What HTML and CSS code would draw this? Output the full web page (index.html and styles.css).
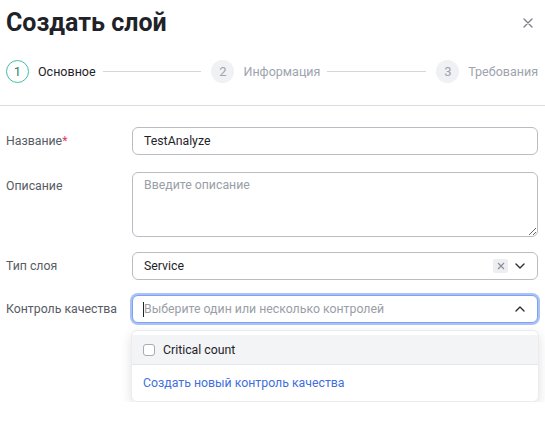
FILE: index.html
```html
<!DOCTYPE html>
<html lang="ru">
<head>
    <meta charset="UTF-8">
    <title>Создать слой</title>
    <link rel="stylesheet" href="styles.css">
</head>
<body>
    <div class="modal">
        <div class="modal-header">
            <h1>Создать слой</h1>
            <button class="close-btn" aria-label="Закрыть">
                <svg width="10" height="10" viewBox="0 0 10 10"><path d="M1 1L9 9M9 1L1 9" stroke="#7a7f8a" stroke-width="1.3" stroke-linecap="round"/></svg>
            </button>
        </div>
        <div class="steps">
            <div class="step active"><span class="step-num">1</span><span class="step-title">Основное</span></div>
            <div class="step-line"></div>
            <div class="step"><span class="step-num">2</span><span class="step-title">Информация</span></div>
            <div class="step-line"></div>
            <div class="step"><span class="step-num">3</span><span class="step-title">Требования</span></div>
        </div>
    </div>
    <div class="divider"></div>
    <form class="form">
        <div class="form-row">
            <label class="form-label">Название<span class="required">*</span></label>
            <input class="field" type="text" value="TestAnalyze">
        </div>
        <div class="form-row form-row-text">
            <label class="form-label">Описание</label>
            <textarea class="field textarea" placeholder="Введите описание"></textarea>
        </div>
        <div class="form-row">
            <label class="form-label">Тип слоя</label>
            <div class="field select">
                <span class="select-value">Service</span>
                <span class="clear-btn">
                    <svg width="8" height="8" viewBox="0 0 8 8"><path d="M1 1L7 7M7 1L1 7" stroke="#8a8f99" stroke-width="1.2"/></svg>
                </span>
                <svg class="chevron" width="10" height="6" viewBox="0 0 10 6"><path d="M1 1L5 5L9 1" fill="none" stroke="#2b2f36" stroke-width="1.4" stroke-linecap="round" stroke-linejoin="round"/></svg>
            </div>
        </div>
        <div class="form-row">
            <label class="form-label">Контроль качества</label>
            <div class="select-wrap">
                <div class="field select focused">
                    <span class="caret"></span>
                    <span class="select-placeholder">Выберите один или несколько контролей</span>
                    <svg class="chevron" width="10" height="6" viewBox="0 0 10 6"><path d="M1 5L5 1L9 5" fill="none" stroke="#2b2f36" stroke-width="1.4" stroke-linecap="round" stroke-linejoin="round"/></svg>
                </div>
                <div class="dropdown">
                    <div class="option hovered">
                        <span class="checkbox"></span>
                        <span>Critical count</span>
                    </div>
                    <div class="dropdown-footer">
                        <a href="#" class="create-link">Создать новый контроль качества</a>
                    </div>
                </div>
            </div>
        </div>
    </form>
</body>
</html>
```

FILE: styles.css
```css
body {
    margin: 0;
    background: #fff;
    font-family: Roboto, "Noto Sans", sans-serif;
    color: #1f2329;
}
.modal {
    padding: 7px 7px 0 6px;
}
.modal-header {
    display: flex;
    justify-content: space-between;
    align-items: center;
    height: 32px;
}
.modal-header h1 {
    margin: 0;
    font-size: 25px;
    font-weight: 700;
    line-height: 32px;
    color: #1f2329;
}
.close-btn {
    border: none;
    background: none;
    padding: 0;
    margin-right: 5px;
    display: flex;
    cursor: pointer;
}
.steps {
    display: flex;
    align-items: center;
    margin-top: 20px;
    height: 24px;
}
.step {
    display: flex;
    align-items: center;
    gap: 9px;
    font-size: 12.5px;
    color: #9ea3ae;
}
.step-num {
    width: 23px;
    height: 23px;
    box-sizing: border-box;
    border-radius: 50%;
    background: #f0f1f4;
    display: flex;
    justify-content: center;
    align-items: center;
    font-size: 13px;
    color: #9ea3ae;
}
.step.active .step-num {
    background: #fff;
    border: 1.5px solid #42bfa7;
    color: #26806f;
}
.step.active .step-title {
    color: #1f2329;
}
.step-line {
    flex: 1;
    height: 1px;
    background: #d4d6da;
    margin: 0 10px 0 7px;
}
.divider {
    height: 1px;
    background: #dcdde0;
    margin-top: 22px;
}
.form {
    display: flex;
    flex-direction: column;
    gap: 15px;
    padding: 21px 7px 0 6px;
}
.form-row {
    display: flex;
    align-items: flex-start;
}
.form-row-text {
    margin-top: 2px;
}
.form-label {
    width: 126px;
    flex-shrink: 0;
    font-size: 12.3px;
    line-height: 28px;
    color: #575b64;
}
.required {
    color: #e5395b;
}
.field {
    flex: 1;
    box-sizing: border-box;
    height: 28px;
    border: 1px solid #b9bcc3;
    border-radius: 6px;
    padding: 0 11px;
    font-family: inherit;
    font-size: 12.3px;
    color: #1f2329;
    background: #fff;
    outline: none;
}
.textarea {
    height: 65px;
    padding: 5px 11px;
    resize: vertical;
}
.textarea::placeholder {
    color: #9a9ea8;
}
.select {
    display: flex;
    align-items: center;
}
.select-value {
    flex: 1;
}
.clear-btn {
    width: 15px;
    height: 14px;
    background: #eceef1;
    border-radius: 2px;
    display: flex;
    justify-content: center;
    align-items: center;
    margin-right: 7px;
}
.chevron {
    margin-right: 1px;
}
.select-wrap {
    flex: 1;
    display: flex;
    flex-direction: column;
}
.select.focused {
    flex: none;
    border-color: #7ea2f0;
    box-shadow: 0 0 0 2px #aac2f6;
    padding-left: 10px;
}
.caret {
    width: 1px;
    height: 15px;
    background: #1f2329;
}
.select-placeholder {
    flex: 1;
    color: #9a9ea8;
}
.dropdown {
    margin: 7px -1px 0;
    background: #fff;
    border: 1px solid #ebecef;
    border-radius: 6px;
    box-shadow: 0 4px 12px rgba(0, 0, 0, 0.12);
    overflow: hidden;
}
.option {
    display: flex;
    align-items: center;
    gap: 8px;
    height: 29px;
    margin-top: 4px;
    padding: 0 11px;
    font-size: 12.3px;
    color: #1f2329;
}
.option.hovered {
    background: #f3f4f6;
}
.checkbox {
    width: 12px;
    height: 12px;
    box-sizing: border-box;
    border: 1px solid #a7abb3;
    border-radius: 3px;
    background: #fff;
}
.dropdown-footer {
    border-top: 1px solid #e6e7ea;
    padding: 7px 11px 10px;
}
.create-link {
    font-size: 12.3px;
    line-height: 15px;
    color: #3f6fe0;
    text-decoration: none;
}
```
